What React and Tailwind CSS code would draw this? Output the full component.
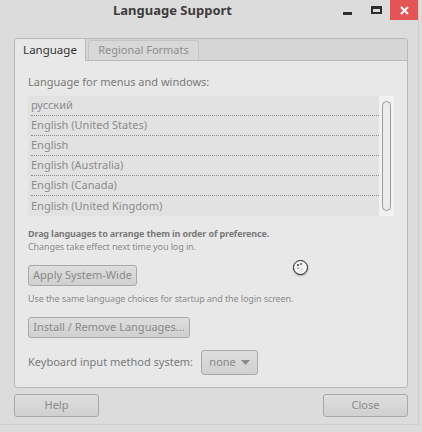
import React from "react";

const languages = [
  "русский",
  "English (United States)",
  "English",
  "English (Australia)",
  "English (Canada)",
  "English (United Kingdom)",
];

function GtkButton({ children, className = "" }) {
  return (
    <div
      className={`flex items-center justify-center rounded-[3px] border border-[#a9a9a9] bg-gradient-to-b from-[#dedede] to-[#d0d0d0] text-[11px] text-[#8a8a8a] ${className}`}
    >
      {children}
    </div>
  );
}

export default function App() {
  return (
    <div
      className="relative h-[432px] w-[422px] overflow-hidden bg-[#dcdcdc] text-[#7a7a7a]"
      style={{ fontFamily: '"Noto Sans", "Open Sans", sans-serif' }}
    >
      <div className="flex h-[425px] w-[419px] flex-col border-r border-b border-[#cfcfcf]">
        {/* Title bar */}
        <div className="flex h-[20px] items-center">
          <div className="w-[345px] pt-[2px] text-center text-[13px] font-bold text-[#3c3c3c]">
            Language Support
          </div>
          <div className="flex h-[20px] w-[45px] items-center">
            <div className="ml-[-2px] mt-[6px] h-[3px] w-[9px] bg-[#2e2e2e]" />
            <div className="ml-[19px] h-[8px] w-[11px] border-2 border-t-[3px] border-[#2e2e2e]" />
          </div>
          <div className="flex h-[20px] w-[28px] items-center justify-center bg-[#e55454]">
            <svg width="9" height="9" viewBox="0 0 9 9">
              <path d="M1 1 L8 8 M8 1 L1 8" stroke="#fff" strokeWidth="2" />
            </svg>
          </div>
        </div>

        {/* Notebook */}
        <div className="ml-[14px] mt-[18px] flex w-[394px] flex-col rounded-[3px] border border-[#b9b9b9] bg-[#e8e8e8]">
          <div className="flex h-[22px] rounded-t-[3px] border-b border-[#b9b9b9] bg-[#d6d6d6]">
            <div className="-mb-px flex w-[71px] items-center justify-center rounded-tl-[3px] border-r border-[#b9b9b9] bg-[#e8e8e8] text-[11.5px] text-[#333]">
              Language
            </div>
            <div className="ml-[2px] mt-[1px] flex w-[111px] items-center justify-center rounded-t-[3px] border border-b-0 border-[#c4c4c4] bg-[#d8d8d8] text-[11px] text-[#8e8e8e]">
              Regional Formats
            </div>
          </div>

          <div className="flex flex-col px-[13px] pb-[12px] pt-[14px]">
            <div className="text-[11px] leading-[14px] text-[#7a7a7a]">
              Language for menus and windows:
            </div>
            <div className="mt-[7px] flex h-[120px]">
              <div className="flex flex-1 flex-col bg-[#e2e2e2] pl-[3px]">
                {languages.map((l, i) => (
                  <div
                    key={l}
                    className={`flex h-[20px] items-center text-[11px] text-[#8c8c8c] ${
                      i < languages.length - 1 ? "border-b border-dotted border-[#8a8a8a]" : ""
                    }`}
                  >
                    {l}
                  </div>
                ))}
              </div>
              <div className="flex w-[15px] justify-center bg-[#f2f2f2] py-[5px]">
                <div className="w-[9px] rounded-full border border-[#9a9a9a] bg-[#ececec]" />
              </div>
            </div>

            <div className="mt-[11px] text-[9px] font-bold leading-[13px] tracking-[-0.15px] text-[#7a7a7a]">
              Drag languages to arrange them in order of preference.
            </div>
            <div className="text-[9px] leading-[13px] tracking-[-0.1px] text-[#8c8c8c]">
              Changes take effect next time you log in.
            </div>

            <GtkButton className="mt-[12px] h-[21px] w-[109px]">Apply System-Wide</GtkButton>

            <div className="mt-[6px] text-[9px] leading-[13px] tracking-[-0.1px] text-[#8c8c8c]">
              Use the same language choices for startup and the login screen.
            </div>

            <GtkButton className="mt-[12px] h-[21px] w-[162px]">Install / Remove Languages...</GtkButton>

            <div className="mt-[12px] flex items-center gap-[8px]">
              <div className="text-[11px] text-[#7a7a7a]">Keyboard input method system:</div>
              <GtkButton className="h-[25px] w-[57px] gap-[5px]">
                <span>none</span>
                <svg width="9" height="6" viewBox="0 0 9 6">
                  <path d="M0 0 L9 0 L4.5 5 Z" fill="#8a8a8a" />
                </svg>
              </GtkButton>
            </div>
          </div>
        </div>

        {/* Dialog buttons */}
        <div className="ml-[14px] mt-[6px] flex w-[394px] justify-between">
          <GtkButton className="h-[23px] w-[85px]">Help</GtkButton>
          <GtkButton className="h-[23px] w-[85px]">Close</GtkButton>
        </div>
      </div>

      {/* Busy cursor */}
      <div className="absolute left-[293px] top-[260px] h-[15px] w-[15px] rounded-full border-[1.5px] border-[#222] bg-[#f4f4f4] shadow-[0_1px_2px_rgba(0,0,0,0.3)]">
        <div className="absolute left-[3px] top-[3px] h-[2px] w-[2px] rounded-full bg-[#333]" />
        <div className="absolute left-[6px] top-[2px] h-[2px] w-[2px] rounded-full bg-[#555]" />
        <div className="absolute left-[3px] top-[6px] h-[2px] w-[2px] rounded-full bg-[#aaa]" />
        <div className="absolute left-[7px] top-[7px] h-[2px] w-[2px] rounded-full bg-[#ccc]" />
      </div>
    </div>
  );
}
